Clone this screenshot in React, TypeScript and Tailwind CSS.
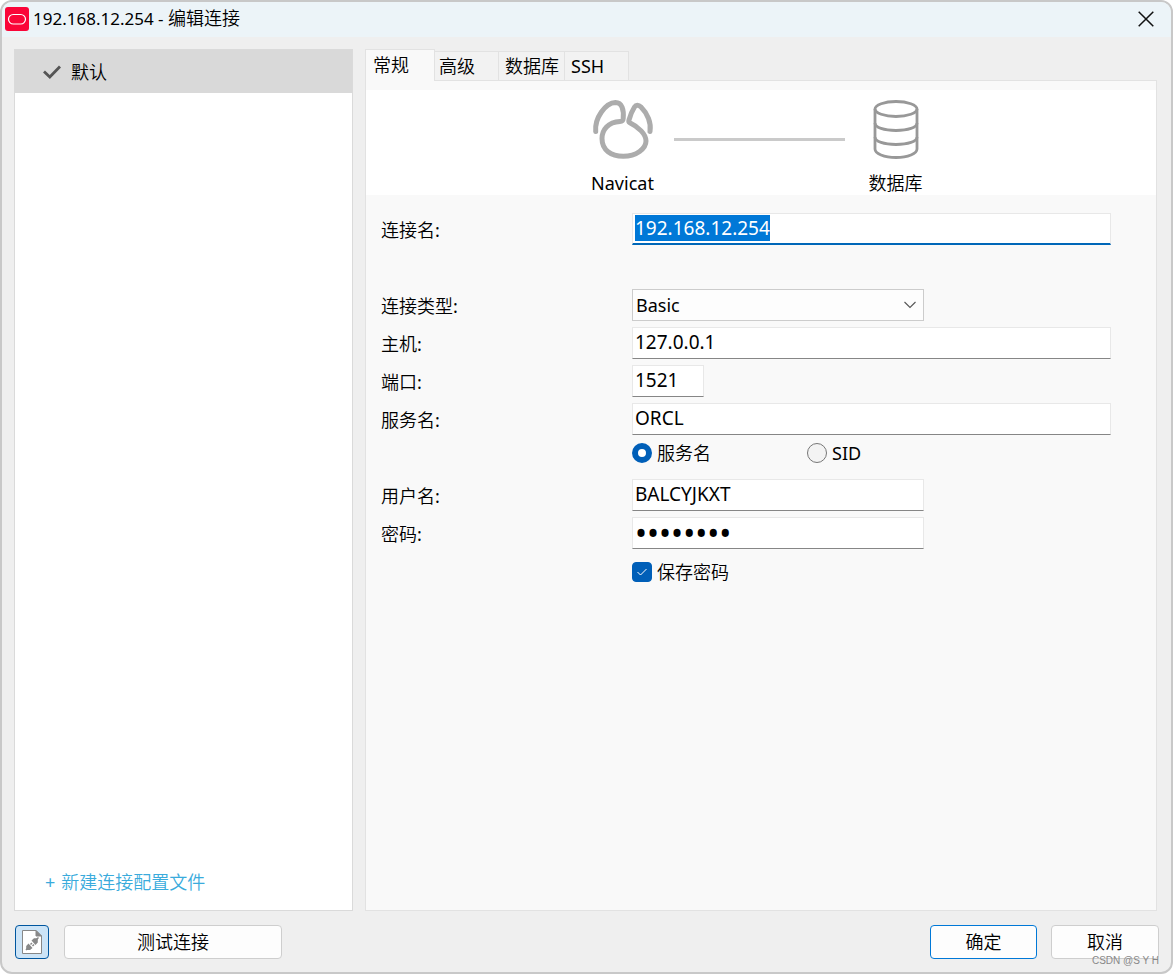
import { useEffect, useRef, useState } from "react";
import type { ReactNode } from "react";

const fieldBase =
  "h-8 min-w-0 border border-[#e8e8e8] bg-white px-[2px] pb-[2px] leading-6 text-black outline-none";
const fieldClass = `${fieldBase} border-b-[#868686] text-[19px]`;

function Row({ label, htmlFor, children }: { label: string; htmlFor: string; children: ReactNode }) {
  return (
    <div className="flex h-8 items-center">
      <label htmlFor={htmlFor} className="w-[251px] shrink-0 pt-[2px]">
        {label}
      </label>
      {children}
    </div>
  );
}

function NavicatIcon() {
  return (
    <svg width="64" height="62" viewBox="0 0 64 62" fill="none" stroke="#acacac" strokeWidth="5" strokeLinecap="round" strokeLinejoin="round" aria-hidden="true">
      <path d="M4.700 31.500C3.500 18 14.500 2.800 24.500 2.500C31 2.500 33 10 32.200 18.500C32 21 31.500 21.400 29 21.500C17 22 11 30 11 38.500C11 50 20 56.300 32.300 56.300C45.500 56.300 55 48.500 55 41C55 34 47.500 27 38.800 22.800C37.500 22.200 37.600 21.500 38 20C39 16 41 11 43.500 7C45 4.500 47.500 4.500 50 7C56.500 13.500 60.500 23 59 31.500" />
    </svg>
  );
}

function DatabaseIcon() {
  return (
    <svg width="46" height="60" viewBox="0 0 46 60" fill="none" stroke="#989898" strokeWidth="2.800" aria-hidden="true">
      <ellipse cx="23" cy="9" rx="21" ry="7.500" />
      <path d="M2 9V49C2 53.500 11 57.500 23 57.500S44 53.500 44 49V9" />
      <path d="M2 23C2 27.500 11 30.500 23 30.500S44 27.500 44 23M2 37C2 41.500 11 44.500 23 44.500S44 41.500 44 37" />
    </svg>
  );
}

const tabs = [
  { name: "高级", width: "w-16", pad: "pl-1" },
  { name: "数据库", width: "w-[66px]", pad: "pl-[6px]" },
  { name: "SSH", width: "w-16", pad: "pl-[6px]" },
];

export default function App() {
  const nameRef = useRef<HTMLInputElement>(null);
  const [mode, setMode] = useState("service");
  const [save, setSave] = useState(true);

  useEffect(() => {
    nameRef.current?.focus();
    nameRef.current?.select();
  }, []);

  return (
    <div className="relative flex min-h-screen flex-col overflow-hidden rounded-xl border-2 border-[#c8c8c8] bg-[#efefef] font-['Noto_Sans','Noto_Sans_CJK_SC_DemiLight','Noto_Sans_CJK_SC',sans-serif] text-[18px] leading-6 text-black">
      <header className="flex h-[35px] shrink-0 items-center bg-[#ecf4f8] pr-[17px] pb-[2px] pl-[3px]">
        <svg width="24" height="24" viewBox="0 0 24 24" aria-hidden="true">
          <rect width="24" height="24" rx="3" fill="#fa0538" />
          <rect x="3.500" y="7.500" width="17" height="9.500" rx="4.750" fill="none" stroke="#fff" strokeWidth="1.200" />
        </svg>
        <h1 className="ml-1 flex-1 text-[17px]">
          192.168.12.254 - <span className="text-[18px]">编辑连接</span>
        </h1>
        <button type="button" aria-label="关闭">
          <svg width="16" height="16" viewBox="0 0 16 16" fill="none" stroke="#111" strokeWidth="1.500" aria-hidden="true">
            <path d="M.7.7l14.600 14.600M15.300.7L.7 15.300" />
          </svg>
        </button>
      </header>

      <div className="flex flex-1 gap-3 px-3 pt-3">
        <aside className="flex w-[339px] shrink-0 flex-col border border-[#dadada] bg-white">
          <button type="button" className="flex h-[43px] items-center bg-[#d9d9d9] pl-7 text-left">
            <svg width="18" height="14" viewBox="0 0 18 14" fill="none" stroke="#555" strokeWidth="2.800" aria-hidden="true">
              <path d="M1 6.500L6.800 12L17 1.500" />
            </svg>
            <span className="ml-[10px]">默认</span>
          </button>
          <a href="#new" className="mt-auto mb-4 flex gap-[6px] pl-[30px] text-[#3aabdc]">
            <span>+</span>
            <span>新建连接配置文件</span>
          </a>
        </aside>

        <main className="mr-[2px] flex min-w-0 flex-1 flex-col">
          <div role="tablist" className="flex items-end">
            <button type="button" role="tab" aria-selected="true" className="z-10 -mb-px h-8 w-[70px] border border-b-0 border-[#e2e2e2] bg-[#f9f9f9] pb-[2px] pl-[7px] text-left">
              常规
            </button>
            {tabs.map((tab) => (
              <button key={tab.name} type="button" role="tab" aria-selected="false" className={`${tab.width} ${tab.pad} h-[29px] border-t border-r border-[#e2e2e2] bg-[#f2f2f2] text-left whitespace-nowrap`}>
                {tab.name}
              </button>
            ))}
          </div>

          <section className="flex-1 border border-[#e2e2e2] bg-[#f9f9f9] pt-[9px]">
            <div className="flex h-[105px] items-start justify-center bg-white pt-[10px] pr-1">
              <div className="flex w-[98px] flex-col items-center">
                <NavicatIcon />
                <span className="mt-[9px]">Navicat</span>
              </div>
              <div className="mt-[38px] ml-[2px] h-[3px] w-[171px] bg-[#cacaca]" />
              <div className="ml-[2px] flex w-[98px] flex-col items-center">
                <DatabaseIcon />
                <span className="mt-[11px]">数据库</span>
              </div>
            </div>

            <form className="mt-[18px] flex flex-col gap-[6px] pr-[45px] pl-[15px]" onSubmit={(event) => event.preventDefault()}>
              <Row label="连接名:" htmlFor="name">
                <input ref={nameRef} id="name" defaultValue="192.168.12.254" className={`${fieldBase} flex-1 border-b-2 border-b-[#0067b8] text-[19px] caret-[#ff8728] selection:bg-[#0078d7] selection:text-white`} />
              </Row>
              <div className="h-8" />
              <Row label="连接类型:" htmlFor="type">
                <div className="relative w-[292px]">
                  <select id="type" defaultValue="Basic" className="block h-8 w-full appearance-none border border-[#cccccc] bg-[#fdfdfd] px-[3px] outline-none">
                    <option>Basic</option>
                    <option>TNS</option>
                  </select>
                  <svg className="pointer-events-none absolute top-3 right-2" width="12" height="8" viewBox="0 0 12 8" fill="none" stroke="#555" strokeWidth="1.100" aria-hidden="true">
                    <path d="M.5 1L6 6.500L11.500 1" />
                  </svg>
                </div>
              </Row>
              <Row label="主机:" htmlFor="host">
                <input id="host" defaultValue="127.0.0.1" className={`${fieldClass} flex-1`} />
              </Row>
              <Row label="端口:" htmlFor="port">
                <input id="port" defaultValue="1521" className={`${fieldClass} w-[72px]`} />
              </Row>
              <Row label="服务名:" htmlFor="service">
                <input id="service" defaultValue="ORCL" className={`${fieldClass} flex-1`} />
              </Row>
              <div className="flex h-8 items-center pb-2 pl-[251px]">
                <label className="flex w-[175px] items-center gap-[5px]">
                  <input type="radio" name="mode" checked={mode === "service"} onChange={() => setMode("service")} className="size-5 appearance-none rounded-full border border-[#777] bg-[#f3f3f3] checked:border-[6px] checked:border-[#005fb8] checked:bg-white" />
                  服务名
                </label>
                <label className="flex items-center gap-[5px]">
                  <input type="radio" name="mode" checked={mode === "sid"} onChange={() => setMode("sid")} className="size-5 appearance-none rounded-full border border-[#777] bg-[#f3f3f3] checked:border-[6px] checked:border-[#005fb8] checked:bg-white" />
                  SID
                </label>
              </div>
              <Row label="用户名:" htmlFor="user">
                <input id="user" defaultValue="BALCYJKXT" className={`${fieldClass} w-[292px]`} />
              </Row>
              <Row label="密码:" htmlFor="password">
                <input id="password" type="password" defaultValue="12345678" className={`${fieldBase} w-[292px] border-b-[#868686] text-[32px]`} />
              </Row>
              <div className="flex h-8 items-center pt-[2px] pl-[251px]">
                <label className="flex items-center gap-[5px]">
                  <span className="relative flex size-5">
                    <input type="checkbox" checked={save} onChange={(event) => setSave(event.target.checked)} className="size-5 appearance-none rounded border border-[#777] bg-white checked:border-[#005fb8] checked:bg-[#005fb8]" />
                    <svg className="pointer-events-none absolute top-[6px] left-[5px]" width="10" height="8" viewBox="0 0 10 8" fill="none" stroke="#fff" strokeWidth="1" aria-hidden="true">
                      <path d="M.5 4L3.500 7L9.500 1" />
                    </svg>
                  </span>
                  保存密码
                </label>
              </div>
            </form>
          </section>
        </main>
      </div>

      <footer className="flex shrink-0 items-center pt-[14px] pr-3 pb-[13px] pl-[13px]">
        <button type="button" aria-label="连接配置" aria-pressed="true" className="flex size-[34px] items-center justify-center rounded border border-[#00569f] bg-[#cce4f7]">
          <svg width="20" height="24" viewBox="0 0 20 24" aria-hidden="true">
            <path d="M.5.5H14L19.500 6V23.500H.5Z" fill="#fff" stroke="#888" />
            <path d="M14 .5V6H19.500Z" fill="#888" stroke="#888" />
            <path d="M4 20L6 18M14 10L16.500 7.500M8.500 14.500L10 13M10.500 16L12 14.500" stroke="#888" strokeWidth="1.500" />
            <path d="M9.500 10.500L12 8.300H15.800V12.500L13.500 15ZM10.500 18L8 20H4.200V16L6.500 13.500Z" fill="#888" />
          </svg>
        </button>
        <button type="button" className="ml-[15px] h-[34px] w-[218px] rounded border border-[#cecece] bg-[#fdfdfd]">
          测试连接
        </button>
        <button type="button" className="ml-auto h-[34px] w-[107px] rounded border border-[#0078d7] bg-[#fdfdfd]">
          确定
        </button>
        <button type="button" className="ml-[14px] h-[34px] w-[108px] rounded border border-[#cecece] bg-[#fdfdfd]">
          取消
        </button>
      </footer>
      <span className="pointer-events-none absolute right-3 bottom-[3px] font-['Liberation_Sans',sans-serif] text-[10px] leading-4 text-[#888]">CSDN @S Y H</span>
    </div>
  );
}
